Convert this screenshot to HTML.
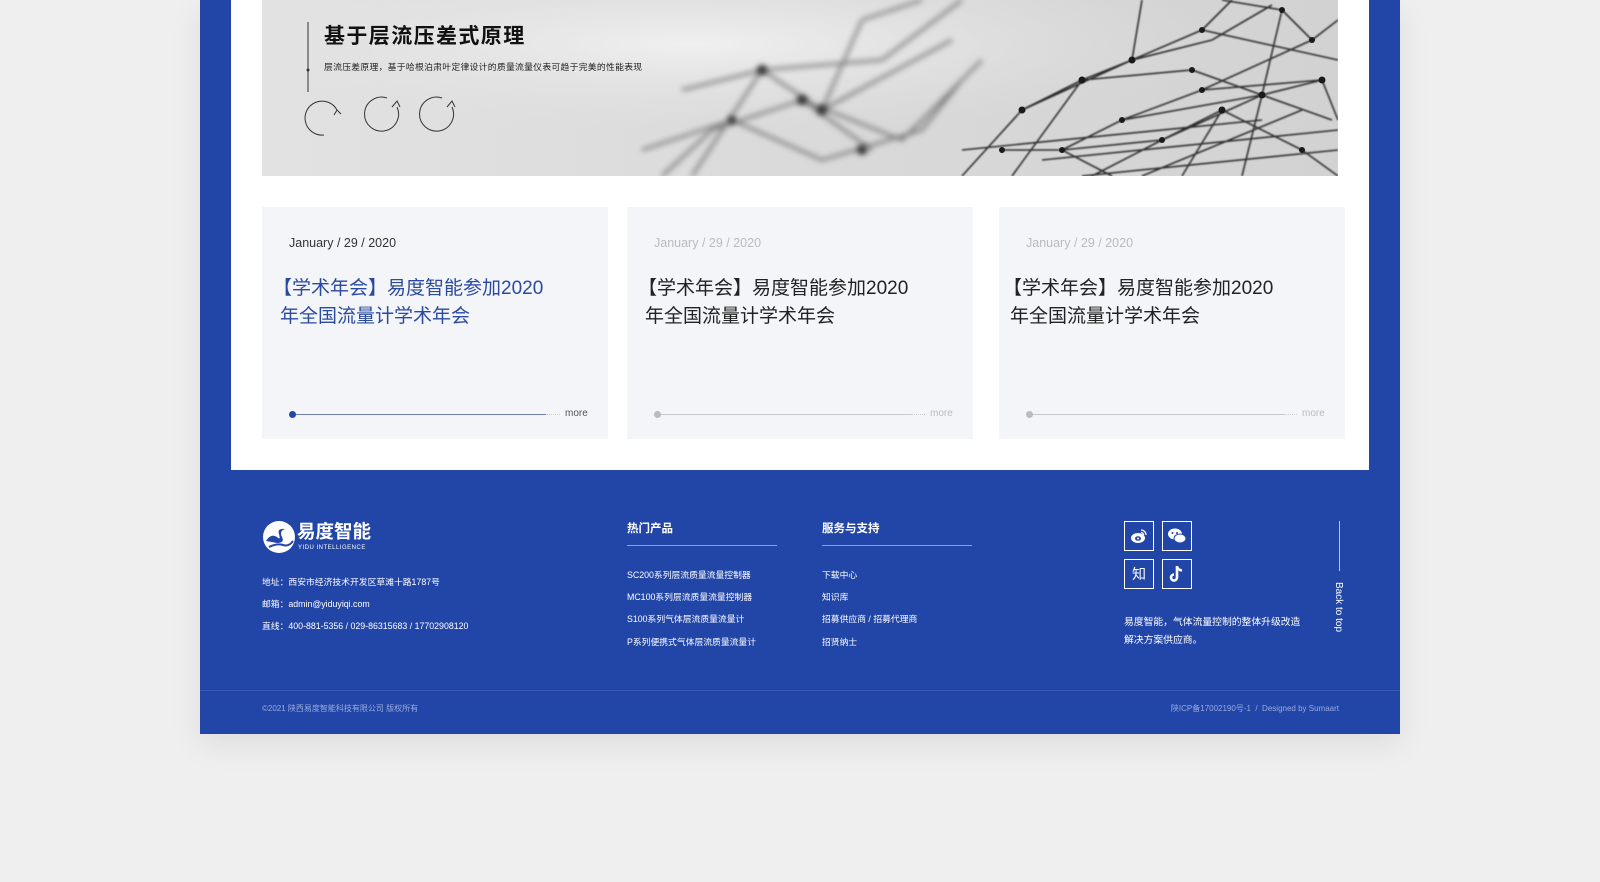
<!DOCTYPE html>
<html><head><meta charset="utf-8">
<style>
*{margin:0;padding:0;box-sizing:border-box}
body{width:1600px;height:882px;background:#efefef;position:relative;overflow:hidden;font-family:"Liberation Sans","Noto Sans CJK SC",sans-serif}
.abs{position:absolute}
.blue{left:200px;top:0;width:1200px;height:734px;background:#2245a8;box-shadow:0 10px 30px rgba(0,0,0,.08)}
.white{left:231px;top:0;width:1138px;height:470px;background:#fff}
.banner{left:262px;top:0;width:1076px;height:176px;background:linear-gradient(90deg,#e2e2e2,#dadada 50%,#d2d2d2);overflow:hidden}
.card{top:207px;width:346px;height:232px;background:#f4f5f9}
.date{left:27px;top:29px;font-size:12.5px;color:#333}
.ttl{left:11px;top:68px;font-size:19px;line-height:28px;color:#222;white-space:nowrap}
.ttl span{padding-left:7px}
.bar{left:31px;top:207px;width:253px;height:1px;background:#c8c8c8}
.dot{left:27px;top:204px;width:7px;height:7px;border-radius:50%;background:#bbb}
.dots{left:284px;top:207px;width:14px;border-top:1px dotted #ccc}
.more{left:303px;top:201px;font-size:10px;color:#bbb}
.f{color:#fff}
.fl{font-size:8.8px;color:#fff;white-space:nowrap}
.ico{width:30px;height:30px;border:1.5px solid #fff;display:flex;align-items:center;justify-content:center;color:#fff}
</style></head><body>
<div class="abs blue"></div>
<div class="abs white"></div>
<div class="abs banner">
<svg width="1076" height="176" viewBox="0 0 1076 176">
<defs><filter id="b"><feGaussianBlur stdDeviation="3"/></filter><filter id="b2"><feGaussianBlur stdDeviation=".8"/></filter>
<radialGradient id="g" cx="0.4" cy="0.25" r="0.5"><stop offset="0" stop-color="#f0f0f0"/><stop offset="1" stop-color="#e0e0e0" stop-opacity="0"/></radialGradient></defs>
<rect width="1076" height="176" fill="url(#g)"/>
<g stroke="#555" stroke-width="3" fill="none" filter="url(#b)" opacity=".7">
<path d="M430 176 L500 70 L560 110 L600 20 M450 130 L540 100 L610 150 M500 70 L620 60 L700 0 M470 120 L560 160 L660 130 L700 80 M540 100 L640 140 L720 60 M600 20 L660 0 M420 90 L500 70 M560 110 L690 40 M380 150 L470 120 M400 176 L450 130"/>
</g>
<g fill="#333" filter="url(#b)"><circle cx="500" cy="70" r="5"/><circle cx="560" cy="110" r="5"/><circle cx="540" cy="100" r="5"/><circle cx="600" cy="150" r="5"/><circle cx="470" cy="120" r="4"/></g>
<g stroke="#2e2e2e" stroke-width="1.6" fill="none" filter="url(#b2)">
<path d="M750 176 L820 80 L870 60 L950 40 L1010 5 M820 80 L930 70 L1000 95 L1060 80 M760 110 L870 60 L940 30 L1076 60 M800 150 L900 140 L960 110 L1040 150 M900 140 L1000 95 L1070 120 M860 120 L940 90 L1050 40 L1076 20 M830 176 L900 140 M920 176 L960 110 M980 176 L1000 95 L1020 10 M1060 80 L1076 120 M940 30 L970 0 M870 60 L880 0 M1050 40 L1020 10 L960 0 M760 110 L820 80 M800 150 L860 120 L1000 95 M700 176 L760 110 M740 150 L800 150 L850 176 M1040 150 L1076 176 M940 90 L1060 80 M780 160 L1076 130 M700 150 L1000 120 M820 176 L1076 150 M880 176 L1040 110"/>
</g>
<g fill="#1a1a1a"><circle cx="820" cy="80" r="3.5"/><circle cx="870" cy="60" r="3.5"/><circle cx="930" cy="70" r="3"/><circle cx="1000" cy="95" r="3.5"/><circle cx="1060" cy="80" r="3.5"/><circle cx="900" cy="140" r="3"/><circle cx="960" cy="110" r="3.5"/><circle cx="1040" cy="150" r="3"/><circle cx="940" cy="90" r="3"/><circle cx="1050" cy="40" r="3"/><circle cx="760" cy="110" r="3.5"/><circle cx="800" cy="150" r="3"/><circle cx="860" cy="120" r="3"/><circle cx="1020" cy="10" r="3"/><circle cx="940" cy="30" r="3"/><circle cx="740" cy="150" r="3"/></g>
<line x1="46" y1="22" x2="46" y2="92" stroke="#333" stroke-width="1"/>
<circle cx="46" cy="70" r="1.5" fill="#333"/>
<g stroke="#333" stroke-width="1" fill="none">
<path d="M75 110 A17 17 0 1 0 62 135"/><path d="M72 115 L75 110 L79 114"/>
<path d="M135 107 A17 17 0 1 1 125 98"/><path d="M130 107 L135 101 L138 107"/>
<path d="M190 107 A17 17 0 1 1 180 98"/><path d="M185 107 L190 101 L193 107"/>
</g>
</svg>
<div class="abs" style="left:62px;top:20px;font-size:21px;font-weight:bold;color:#111;letter-spacing:1.4px">基于层流压差式原理</div>
<div class="abs" style="left:62px;top:60px;font-size:8.8px;color:#222;letter-spacing:.3px;white-space:nowrap">层流压差原理，基于哈根泊肃叶定律设计的质量流量仪表可趋于完美的性能表现</div>
</div>

<div class="abs card" style="left:262px">
<div class="abs date">January / 29 / 2020</div>
<div class="abs ttl" style="color:#2a4aa0">【学术年会】易度智能参加2020<br><span>年全国流量计学术年会</span></div>
<div class="abs bar" style="background:#6f7fb4"></div><div class="abs dot" style="background:#2245a8"></div><div class="abs dots"></div><div class="abs more" style="color:#555">more</div>
</div>
<div class="abs card" style="left:627px">
<div class="abs date" style="color:#bbb">January / 29 / 2020</div>
<div class="abs ttl">【学术年会】易度智能参加2020<br><span>年全国流量计学术年会</span></div>
<div class="abs bar"></div><div class="abs dot"></div><div class="abs dots"></div><div class="abs more">more</div>
</div>
<div class="abs card" style="left:999px">
<div class="abs date" style="color:#bbb">January / 29 / 2020</div>
<div class="abs ttl" style="left:4px">【学术年会】易度智能参加2020<br><span>年全国流量计学术年会</span></div>
<div class="abs bar"></div><div class="abs dot"></div><div class="abs dots"></div><div class="abs more">more</div>
</div>

<!-- footer -->
<svg class="abs" style="left:263px;top:521px" width="32" height="32" viewBox="0 0 32 32"><circle cx="16" cy="16" r="16" fill="#fff"/><path d="M3 20 Q8 12 14 16 Q18 20 16 13 Q14 7 22 8 Q16 10 19 16 Q22 22 14 22 Q9 21 3 20Z" fill="#2245a8"/><path d="M6 26 Q14 22 20 24 Q26 26 30 20" stroke="#2245a8" stroke-width="2" fill="none"/></svg>
<div class="abs f" style="left:297px;top:521px;font-size:18.5px;line-height:22px;font-weight:bold">易度智能</div>
<div class="abs f" style="left:298px;top:545px;font-size:6px;line-height:7px;letter-spacing:.5px">YIDU INTELLIGENCE</div>
<div class="abs fl" style="left:262px;top:575px">地址：西安市经济技术开发区草滩十路1787号</div>
<div class="abs fl" style="left:262px;top:597px">邮箱：admin@yiduyiqi.com</div>
<div class="abs fl" style="left:262px;top:619px">直线：400-881-5356 / 029-86315683 / 17702908120</div>

<div class="abs f" style="left:627px;top:520px;font-size:11.5px;font-weight:bold">热门产品</div>
<div class="abs" style="left:627px;top:545px;width:150px;height:1px;background:#8ea0d6"></div>
<div class="abs fl" style="left:627px;top:568px">SC200系列层流质量流量控制器</div>
<div class="abs fl" style="left:627px;top:590px">MC100系列层流质量流量控制器</div>
<div class="abs fl" style="left:627px;top:612px">S100系列气体层流质量流量计</div>
<div class="abs fl" style="left:627px;top:635px">P系列便携式气体层流质量流量计</div>

<div class="abs f" style="left:822px;top:520px;font-size:11.5px;font-weight:bold">服务与支持</div>
<div class="abs" style="left:822px;top:545px;width:150px;height:1px;background:#8ea0d6"></div>
<div class="abs fl" style="left:822px;top:568px">下载中心</div>
<div class="abs fl" style="left:822px;top:590px">知识库</div>
<div class="abs fl" style="left:822px;top:612px">招募供应商 / 招募代理商</div>
<div class="abs fl" style="left:822px;top:635px">招贤纳士</div>

<div class="abs ico" style="left:1124px;top:521px"><svg width="18" height="16" viewBox="0 0 18 16"><ellipse cx="8" cy="10" rx="7" ry="5" fill="#fff"/><ellipse cx="8" cy="10.5" rx="3" ry="2.3" fill="#2245a8"/><circle cx="8" cy="10.5" r="1" fill="#fff"/><path d="M11 2 A5 5 0 0 1 16 7 M11 4.5 A2.5 2.5 0 0 1 13.5 7" stroke="#fff" stroke-width="1.3" fill="none"/></svg></div>
<div class="abs ico" style="left:1162px;top:521px"><svg width="20" height="16" viewBox="0 0 20 16"><ellipse cx="8" cy="6" rx="7" ry="5.5" fill="#fff"/><ellipse cx="13" cy="10.5" rx="6" ry="4.5" fill="#fff" stroke="#2245a8" stroke-width="1"/><circle cx="5.5" cy="5" r="1" fill="#2245a8"/><circle cx="10" cy="5" r="1" fill="#2245a8"/></svg></div>
<div class="abs ico" style="left:1124px;top:559px;font-size:14px">知</div>
<div class="abs ico" style="left:1162px;top:559px"><svg width="16" height="18" viewBox="0 0 16 18"><path d="M8 1 V12.5 A3 3 0 1 1 5 9.5" stroke="#fff" stroke-width="2.6" fill="none"/><path d="M8 1.5 Q9 5 13 5.5" stroke="#fff" stroke-width="2.4" fill="none"/></svg></div>
<div class="abs fl" style="left:1124px;top:614px;line-height:18px;font-size:9.8px">易度智能，气体流量控制的整体升级改造<br>解决方案供应商。</div>

<div class="abs" style="left:1339px;top:521px;width:1px;height:50px;background:#b8c3e6"></div>
<div class="abs f" style="left:1333px;top:582px;font-size:10px;writing-mode:vertical-rl">Back to top</div>

<div class="abs" style="left:200px;top:690px;width:1200px;height:1px;background:#3a5bb6"></div>
<div class="abs" style="left:262px;top:703px;font-size:8px;color:#9aabdd">©2021 陕西易度智能科技有限公司 版权所有</div>
<div class="abs" style="left:1100px;top:703px;width:239px;text-align:right;font-size:8px;color:#9aabdd">陕ICP备17002190号-1 &nbsp;/ &nbsp;Designed by Sumaart</div>
</body></html>
